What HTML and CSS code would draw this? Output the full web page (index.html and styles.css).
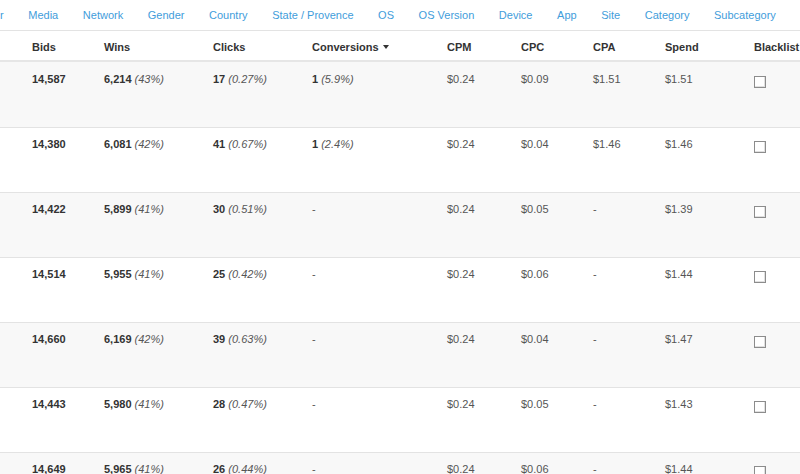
FILE: index.html
```html
<!DOCTYPE html>
<html lang="en">
<head>
<meta charset="utf-8">
<title>Report</title>
<link rel="stylesheet" href="styles.css">
</head>
<body>
<div class="page">
  <nav class="tabs">
    <a class="tab tab-cut" href="#">r</a>
    <a class="tab" href="#">Media</a>
    <a class="tab" href="#">Network</a>
    <a class="tab" href="#">Gender</a>
    <a class="tab" href="#">Country</a>
    <a class="tab" href="#">State / Provence</a>
    <a class="tab" href="#">OS</a>
    <a class="tab" href="#">OS Version</a>
    <a class="tab" href="#">Device</a>
    <a class="tab" href="#">App</a>
    <a class="tab" href="#">Site</a>
    <a class="tab" href="#">Category</a>
    <a class="tab" href="#">Subcategory</a>
  </nav>
  <table class="grid">
    <colgroup>
      <col class="c-lead"><col class="c-bids"><col class="c-wins"><col class="c-clicks"><col class="c-conv">
      <col class="c-cpm"><col class="c-cpc"><col class="c-cpa"><col class="c-spend"><col class="c-black">
    </colgroup>
    <thead>
      <tr>
        <th></th><th>Bids</th><th>Wins</th><th>Clicks</th>
        <th>Conversions <span class="caret"></span></th>
        <th>CPM</th><th>CPC</th><th>CPA</th><th>Spend</th><th>Blacklist</th>
      </tr>
    </thead>
    <tbody>
      <tr>
        <td></td><td><b>14,587</b></td><td><b>6,214</b> <i>(43%)</i></td><td><b>17</b> <i>(0.27%)</i></td>
        <td><b>1</b> <i>(5.9%)</i></td><td>$0.24</td><td>$0.09</td><td>$1.51</td><td>$1.51</td>
        <td><input class="check" type="checkbox"></td>
      </tr>
      <tr>
        <td></td><td><b>14,380</b></td><td><b>6,081</b> <i>(42%)</i></td><td><b>41</b> <i>(0.67%)</i></td>
        <td><b>1</b> <i>(2.4%)</i></td><td>$0.24</td><td>$0.04</td><td>$1.46</td><td>$1.46</td>
        <td><input class="check" type="checkbox"></td>
      </tr>
      <tr>
        <td></td><td><b>14,422</b></td><td><b>5,899</b> <i>(41%)</i></td><td><b>30</b> <i>(0.51%)</i></td>
        <td>-</td><td>$0.24</td><td>$0.05</td><td>-</td><td>$1.39</td>
        <td><input class="check" type="checkbox"></td>
      </tr>
      <tr>
        <td></td><td><b>14,514</b></td><td><b>5,955</b> <i>(41%)</i></td><td><b>25</b> <i>(0.42%)</i></td>
        <td>-</td><td>$0.24</td><td>$0.06</td><td>-</td><td>$1.44</td>
        <td><input class="check" type="checkbox"></td>
      </tr>
      <tr>
        <td></td><td><b>14,660</b></td><td><b>6,169</b> <i>(42%)</i></td><td><b>39</b> <i>(0.63%)</i></td>
        <td>-</td><td>$0.24</td><td>$0.04</td><td>-</td><td>$1.47</td>
        <td><input class="check" type="checkbox"></td>
      </tr>
      <tr>
        <td></td><td><b>14,443</b></td><td><b>5,980</b> <i>(41%)</i></td><td><b>28</b> <i>(0.47%)</i></td>
        <td>-</td><td>$0.24</td><td>$0.05</td><td>-</td><td>$1.43</td>
        <td><input class="check" type="checkbox"></td>
      </tr>
      <tr>
        <td></td><td><b>14,649</b></td><td><b>5,965</b> <i>(41%)</i></td><td><b>26</b> <i>(0.44%)</i></td>
        <td>-</td><td>$0.24</td><td>$0.06</td><td>-</td><td>$1.44</td>
        <td><input class="check" type="checkbox"></td>
      </tr>
    </tbody>
  </table>
</div>
</body>
</html>
```

FILE: styles.css
```css
html, body {
  margin: 0;
  padding: 0;
  background: #fff;
}

body {
  font-family: "Liberation Sans", Arial, sans-serif;
  font-size: 11px;
  color: #333;
  overflow: hidden;
}

.page {
  width: 800px;
  height: 474px;
  overflow: hidden;
}

.tabs {
  display: flex;
  align-items: center;
  height: 30px;
  border-bottom: 1px solid #e3e3e3;
  white-space: nowrap;
}

.tab {
  display: block;
  padding: 0 12.3px;
  line-height: 30px;
  color: #3f9ddb;
  text-decoration: none;
}

.tab-cut {
  padding-left: 0;
}

.grid {
  table-layout: fixed;
  width: 866px;
  border-collapse: separate;
  border-spacing: 0;
}

.c-lead { width: 24px; }
.c-bids { width: 72px; }
.c-wins { width: 109px; }
.c-clicks { width: 99px; }
.c-conv { width: 135px; }
.c-cpm { width: 74px; }
.c-cpc { width: 72px; }
.c-cpa { width: 72px; }
.c-spend { width: 89px; }
.c-black { width: 120px; }

.grid th {
  text-align: left;
  font-weight: bold;
  line-height: 15px;
  padding: 9px 8px 5px;
  border-bottom: 2px solid #e6e6e6;
  white-space: nowrap;
  overflow: hidden;
}

.caret {
  display: inline-block;
  width: 0;
  height: 0;
  margin-left: 1px;
  vertical-align: 2px;
  border-top: 4px solid #333;
  border-left: 3.5px solid transparent;
  border-right: 3.5px solid transparent;
}

.grid tbody tr {
  height: 65px;
}

.grid td {
  box-sizing: border-box;
  height: 65px;
  text-align: left;
  vertical-align: top;
  line-height: 15px;
  padding: 9px 8px 0;
  border-top: 1px solid #e3e3e3;
  white-space: nowrap;
  color: #555;
}

.grid tbody tr:first-child td {
  border-top: 0;
  padding-top: 10px;
}

.grid tbody tr:nth-child(odd) td {
  background: #f8f8f8;
}

.grid td b {
  color: #333;
}

.grid td i {
  color: #555;
}

.check {
  appearance: none;
  -webkit-appearance: none;
  display: block;
  margin: 4px 0 -4px 0;
  width: 12px;
  height: 12px;
  border: 1px solid #8c8c8c;
  border-radius: 0;
  background: #fff;
  box-shadow: inset -1px -1px 0 #e0e0e0;
}
```
